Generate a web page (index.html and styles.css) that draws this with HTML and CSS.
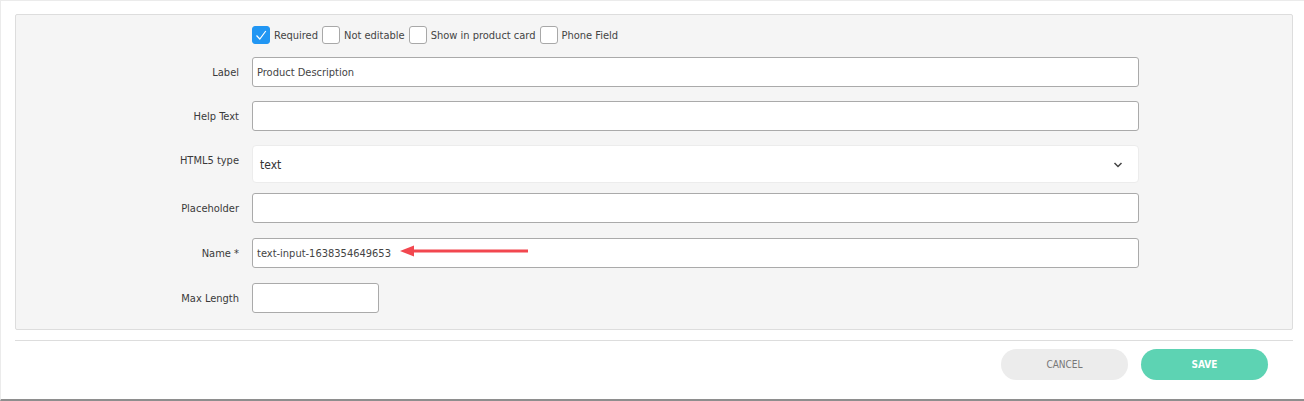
FILE: index.html
```html
<!DOCTYPE html>
<html lang="en">
<head>
    <meta charset="UTF-8">
    <meta name="viewport" content="width=device-width, initial-scale=1.0">
    <title>Field Settings</title>
    <link rel="stylesheet" href="styles.css">
</head>
<body>
<div class="frame">

    <!-- Field options -->
    <div class="panel">
        <div class="checks">
            <label class="check"><span class="box checked"><svg width="18" height="18" viewBox="0 0 18 18"><path d="M4.5 9.5 L7.8 13 L13.8 5" fill="none" stroke="#fff" stroke-width="1.2"/></svg></span>Required</label>
            <label class="check"><span class="box"></span>Not editable</label>
            <label class="check"><span class="box"></span>Show in product card</label>
            <label class="check"><span class="box"></span>Phone Field</label>
        </div>

        <div class="row first">
            <div class="lbl">Label</div>
            <div class="field"><div class="input">Product Description</div></div>
        </div>
        <div class="row first">
            <div class="lbl">Help Text</div>
            <div class="field"><div class="input"></div></div>
        </div>
        <div class="row select-row">
            <div class="lbl">HTML5 type</div>
            <div class="field">
                <div class="select">
                    <span>text</span>
                    <svg width="10" height="6" viewBox="0 0 10 6"><path d="M1.5 1 L5 4.5 L8.5 1" fill="none" stroke="#444" stroke-width="1.5"/></svg>
                </div>
            </div>
        </div>
        <div class="row">
            <div class="lbl">Placeholder</div>
            <div class="field"><div class="input"></div></div>
        </div>
        <div class="row">
            <div class="lbl">Name *</div>
            <div class="field marked">
                <div class="input">text-input-1638354649653</div>
                <svg class="arrow" width="130" height="12" viewBox="0 0 130 12"><path d="M12 6 H128" stroke="#f2474f" stroke-width="3"/><path d="M0 6 L14 0.5 L14 11.5 Z" fill="#f2474f"/></svg>
            </div>
        </div>
        <div class="row last">
            <div class="lbl">Max Length</div>
            <div class="field"><div class="input short"></div></div>
        </div>
    </div>

    <hr class="divider">

    <div class="actions">
        <button class="btn cancel">CANCEL</button>
        <button class="btn save">SAVE</button>
    </div>

</div>
</body>
</html>
```

FILE: styles.css
```css
body {
    margin: 0;
    font-family: "DejaVu Sans Condensed", "DejaVu Sans", sans-serif;
    font-size: 11px;
    color: #444;
}
.frame {
    box-sizing: border-box;
    height: 401px;
    border-top: 1px solid #ebebeb;
    border-left: 1px solid #ebebeb;
    border-bottom: 2px solid #8e8e8e;
    padding: 13px 11px 0 14px;
}
.panel {
    background: #f5f5f5;
    border: 1px solid #ddd;
    border-radius: 2px;
    padding: 11px 0 16px 0;
}
.checks {
    display: flex;
    align-items: center;
    height: 18px;
    margin-left: 236px;
    margin-bottom: 13px;
}
.check {
    display: flex;
    align-items: center;
    margin-right: 4px;
}
.box {
    box-sizing: border-box;
    width: 18px;
    height: 18px;
    border: 1px solid #a8a8a8;
    border-radius: 3px;
    background: #fff;
    margin-right: 4px;
    display: inline-block;
}
.box.checked {
    background: #2196f3;
    border-color: #2196f3;
}
.box.checked svg {
    display: block;
    margin: -1px;
}
.row {
    display: flex;
    margin-bottom: 15px;
}
.row.first {
    margin-bottom: 14px;
}
.row.select-row {
    margin-bottom: 10px;
}
.row.last {
    margin-bottom: 0;
}
.lbl {
    width: 223px;
    text-align: right;
    padding-right: 13px;
    padding-top: 9px;
    color: #3a3a3a;
}
.field {
    width: 887px;
}
.marked {
    position: relative;
}
.input {
    box-sizing: border-box;
    height: 30px;
    background: #fff;
    border: 1px solid #aaa;
    border-radius: 3px;
    padding: 8px 4px 0 4px;
    color: #444;
}
.input.short {
    width: 127px;
}
.select {
    box-sizing: border-box;
    height: 38px;
    background: #fff;
    border: 1px solid #ececec;
    border-radius: 4px;
    padding: 1px 15px 0 7px;
    display: flex;
    align-items: center;
    justify-content: space-between;
    font-size: 12px;
    color: #333;
}
.arrow {
    position: absolute;
    left: 148px;
    top: 7px;
}
.divider {
    border: none;
    border-top: 1px solid #ddd;
    margin: 10px 0 0 0;
    width: 1278px;
}
.actions {
    display: flex;
    justify-content: flex-end;
    gap: 13px;
    margin-top: 8px;
    padding-right: 25px;
}
.btn {
    width: 127px;
    height: 31px;
    border: none;
    border-radius: 16px;
    font-family: "DejaVu Sans Condensed", "DejaVu Sans", sans-serif;
    font-size: 10px;
}
.cancel {
    background: #ececec;
    color: #777;
}
.save {
    background: #5dd3b3;
    color: #fff;
    font-weight: bold;
}
```
